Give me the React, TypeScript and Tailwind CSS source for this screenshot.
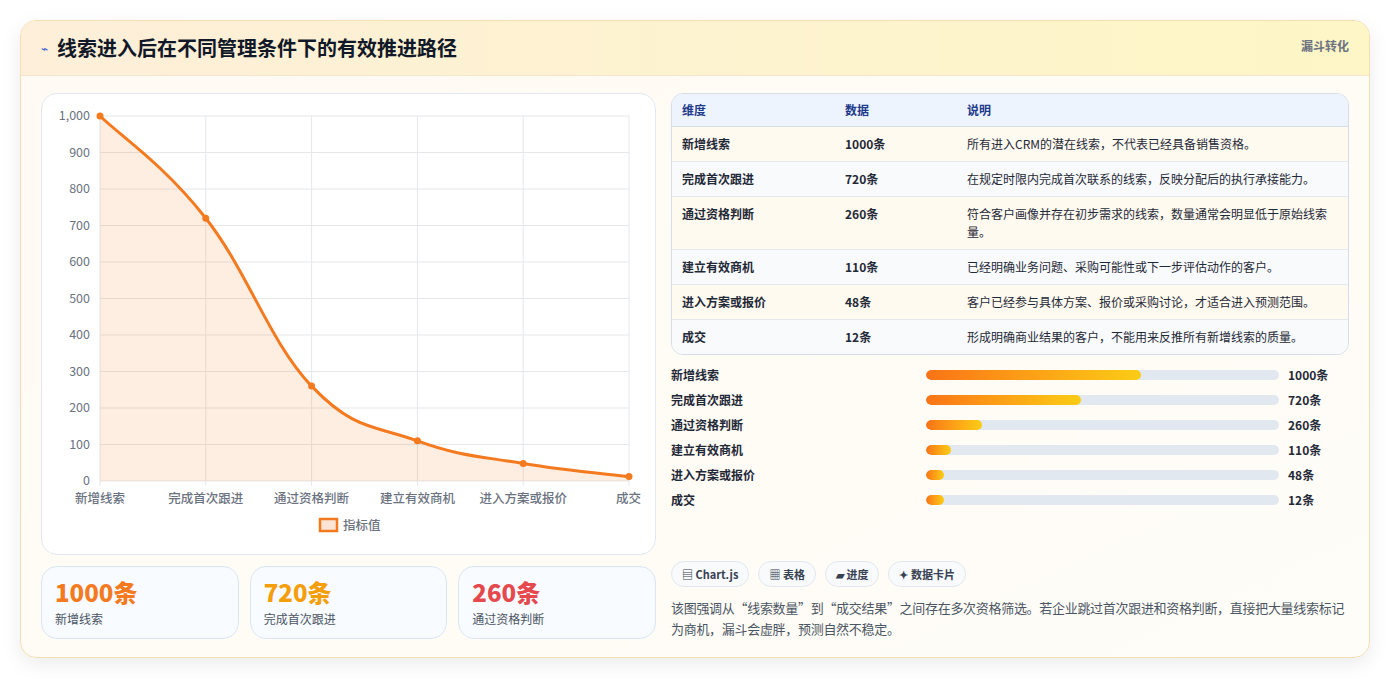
import React from 'react'

const stages = [
  { name: '新增线索', v: 1000, desc: '所有进入CRM的潜在线索，不代表已经具备销售资格。', bar: 'w-[61%]' },
  { name: '完成首次跟进', v: 720, desc: '在规定时限内完成首次联系的线索，反映分配后的执行承接能力。', bar: 'w-[44%]' },
  { name: '通过资格判断', v: 260, desc: '符合客户画像并存在初步需求的线索，数量通常会明显低于原始线索量。', bar: 'w-[16%]' },
  { name: '建立有效商机', v: 110, desc: '已经明确业务问题、采购可能性或下一步评估动作的客户。', bar: 'w-[7%]' },
  { name: '进入方案或报价', v: 48, desc: '客户已经参与具体方案、报价或采购讨论，才适合进入预测范围。', bar: 'w-[5%]' },
  { name: '成交', v: 12, desc: '形成明确商业结果的客户，不能用来反推所有新增线索的质量。', bar: 'w-[5%]' },
]

const font = { fontFamily: '"Noto Sans CJK SC", "Liberation Sans", sans-serif' }

function Chart() {
  const x0 = 58, x1 = 587, y0 = 22, y1 = 387
  const pts = stages.map((s, i) => [x0 + ((x1 - x0) / 5) * i, y1 - (s.v / 1000) * (y1 - y0)])
  let d = `M${pts[0][0]},${pts[0][1]}`
  for (let i = 0; i < pts.length - 1; i++) {
    const p0 = pts[i - 1] || pts[i], p1 = pts[i], p2 = pts[i + 1], p3 = pts[i + 2] || p2
    const t = 0.2
    const c1 = [p1[0] + (p2[0] - p0[0]) * t, p1[1] + (p2[1] - p0[1]) * t]
    const c2 = [p2[0] - (p3[0] - p1[0]) * t, p2[1] - (p3[1] - p1[1]) * t]
    d += ` C${c1[0]},${c1[1]} ${c2[0]},${c2[1]} ${p2[0]},${p2[1]}`
  }
  const area = `${d} L${x1},${y1} L${x0},${y1} Z`
  const ticks = [0, 100, 200, 300, 400, 500, 600, 700, 800, 900, 1000]
  return (
    <svg width="615" height="461" viewBox="0 0 615 461" className="block" style={font}>
      {ticks.map((t) => {
        const y = y1 - (t / 1000) * (y1 - y0)
        return (
          <g key={t}>
            <line x1={x0} x2={x1} y1={y} y2={y} stroke="#e5e7eb" />
            <text x={48} y={y + 4} textAnchor="end" fontSize="12.5" fill="#6b7280">{t === 1000 ? '1,000' : t}</text>
          </g>
        )
      })}
      {pts.map((p, i) => (
        <g key={i}>
          <line x1={p[0]} x2={p[0]} y1={y0} y2={y1 + 5} stroke="#e5e7eb" />
          <text x={i === 5 ? p[0] - 2 : p[0]} y={409} textAnchor={i === 5 ? 'end' : 'middle'} fontSize="12.5" fontWeight="500" fill="#6b7280" dx={i === 5 ? 14 : 0}>{stages[i].name}</text>
        </g>
      ))}
      <path d={area} fill="#f97316" fillOpacity="0.13" />
      <path d={d} fill="none" stroke="#f47a1f" strokeWidth="3" />
      {pts.map((p, i) => (
        <circle key={i} cx={p[0]} cy={p[1]} r="3.5" fill="#f47a1f" />
      ))}
      <rect x={278} y={425} width={17} height={12} fill="#fde5d6" stroke="#f47a1f" strokeWidth="2.5" />
      <text x={301} y={436} fontSize="12.5" fontWeight="500" fill="#6b7280">指标值</text>
    </svg>
  )
}

export default function App() {
  return (
    <div className="min-h-screen bg-white p-5" style={font}>
      <div className="w-[1350px] overflow-hidden rounded-2xl border border-[#f5deb3] bg-gradient-to-br from-[#fffaf3] to-[#fffdf8] shadow-[0_6px_20px_rgba(0,0,0,0.08)]">
        <div className="flex h-[55px] items-start justify-between border-b border-[#f3e6cc] bg-gradient-to-r from-[#fdefd9] to-[#fef6c6] px-5 pt-[12px]">
          <div className="flex items-center gap-[9px]">
            <span className="text-[12px] text-[#3b5bdb]">⌁</span>
            <span className="text-[20px] font-bold text-[#111827]">线索进入后在不同管理条件下的有效推进路径</span>
          </div>
          <span className="pt-[4px] text-[12px] font-bold text-[#6b7280]">漏斗转化</span>
        </div>
        <div className="flex gap-[15px] px-5 pt-[17px] pb-[18px]">
          <div className="flex w-[615px] flex-col gap-[11px]">
            <div className="h-[462px] rounded-2xl border border-[#e2e8f0] bg-white">
              <Chart />
            </div>
            <div className="grid grid-cols-3 gap-[11px]">
              {[
                ['1000条', '新增线索', 'text-[#f47a1f]'],
                ['720条', '完成首次跟进', 'text-[#f59e0b]'],
                ['260条', '通过资格判断', 'text-[#e5484d]'],
              ].map(([v, l, c]) => (
                <div key={l} className="h-[73px] rounded-2xl border border-[#dbe6f5] bg-[#f8fbff] px-[13px] pt-[10px]">
                  <div className={`text-[24px] font-extrabold leading-[30px] ${c}`}>{v}</div>
                  <div className="mt-[3px] text-[12px] text-[#4b5563]">{l}</div>
                </div>
              ))}
            </div>
          </div>
          <div className="flex w-[680px] flex-col">
            <div className="overflow-hidden rounded-xl border border-[#d5dde8] text-[12px]">
              <div className="flex h-[33px] items-center border-b border-[#d5dde8] bg-[#edf4fd] font-bold text-[#1e3a8a]">
                <div className="w-[173px] pl-[10px]">维度</div>
                <div className="w-[122px]">数据</div>
                <div className="flex-1">说明</div>
              </div>
              {stages.map((s, i) => (
                <div key={s.name} className={`flex items-start border-b border-[#e5eaf1] py-[9px] last:border-b-0 ${i % 2 === 0 ? 'bg-[#fffaf0]' : 'bg-[#f8fafc]'}`}>
                  <div className="w-[173px] pl-[10px] font-semibold leading-[16px] text-[#1f2937]">{s.name}</div>
                  <div className="w-[122px] font-semibold leading-[16px] text-[#1f2937]">{s.v}条</div>
                  <div className="flex-1 pr-[10px] leading-[18px] -my-[1px] text-[#1f2937]">{s.desc}</div>
                </div>
              ))}
            </div>
            <div className="mt-[11px] flex flex-col gap-[7px]">
              {stages.map((s) => (
                <div key={s.name} className="flex h-[18px] items-center text-[12px]">
                  <div className="w-[255px] font-semibold text-[#1f2937]">{s.name}</div>
                  <div className="h-[10px] w-[353px] overflow-hidden rounded-full bg-[#e2e8f0]">
                    <div className={`h-full rounded-full bg-gradient-to-r from-[#f97316] to-[#facc15] ${s.bar}`} />
                  </div>
                  <div className="ml-[9px] font-bold text-[#1f2937]">{s.v}条</div>
                </div>
              ))}
            </div>
            <div className="mt-auto flex gap-[9px]">
              {['▤ Chart.js', '▦ 表格', '▰ 进度', '✦ 数据卡片'].map((c) => (
                <span key={c} className="rounded-full border border-[#e2e8f0] bg-[#f8fafc] px-[10px] py-[4px] text-[11px] font-bold text-[#374151]">{c}</span>
              ))}
            </div>
            <p className="mt-[10px] text-[13px] leading-[21px] tracking-[-0.3px] text-[#4b5563]">
              该图强调从“线索数量”到“成交结果”之间存在多次资格筛选。若企业跳过首次跟进和资格判断，直接把大量线索标记为商机，漏斗会虚胖，预测自然不稳定。
            </p>
          </div>
        </div>
      </div>
    </div>
  )
}
